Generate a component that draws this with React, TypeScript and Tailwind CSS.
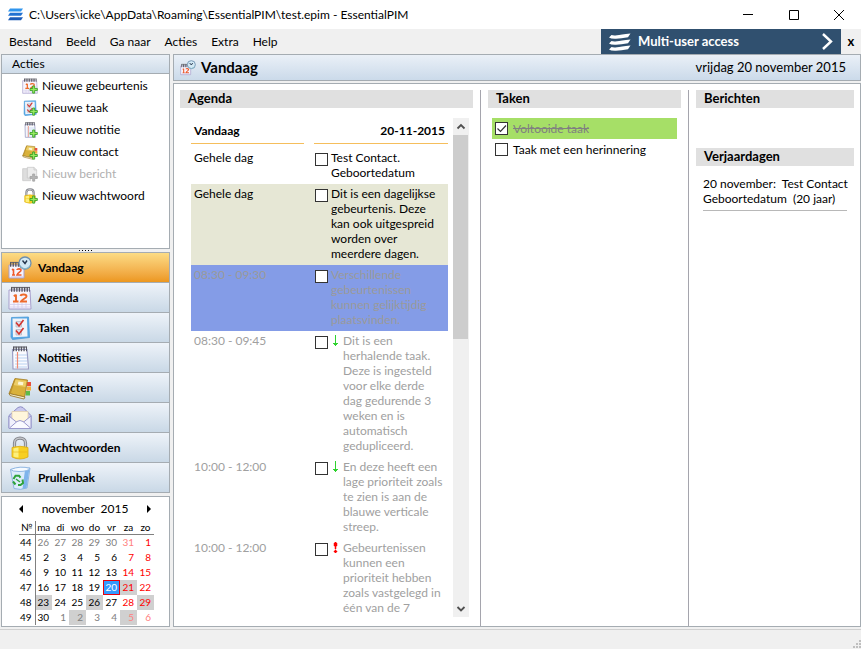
import { useState } from "react";
import type { ReactNode } from "react";

type IconProps = { className?: string };

const Spiral = ({ from, to, y }: { from: number; to: number; y: number }) => (
  <>
    <path d={`M${from} ${y - 2}H${to}`} stroke="#6e6e78" strokeWidth="1.2" fill="none" />
    <path d={`M${from} ${y}H${to}`} stroke="#55555e" strokeWidth="4.5" strokeDasharray="1.3 1.3" fill="none" />
  </>
);

const CalendarArt = () => (
  <>
    <path d="M1 4h21l1 19H1z" fill="#f6f4fd" stroke="#a79fcc" />
    <path d="M2 18.500h20M2 21h20M6 17v6M10 17v6M14 17v6M18 17v6" stroke="#cfc9ea" strokeWidth=".7" />
    <Spiral from={3} to={22} y={3.5} />
    <path d="M8 8.500v7M5.800 10.200l2-1.500M5 15.500h5.500" stroke="#ee6a2c" strokeWidth="1.900" fill="none" />
    <path d="M12.500 10c.5-2 6-2 6 .4 0 1.800-4.500 2.800-5.500 5.100h6" stroke="#ee6a2c" strokeWidth="1.900" fill="none" />
  </>
);

const TodayArt = () => (
  <>
    <path d="M1 9h15v13H1z" fill="#f6f4fd" stroke="#a79fcc" />
    <Spiral from={2} to={11} y={8.5} />
    <path d="M5.500 13v6M4 14l1.500-1M4 19h3" stroke="#ee5a2c" strokeWidth="1.600" fill="none" />
    <path d="M9 14c0-1.500 4-1.500 4 .3 0 1.500-3 2.200-4 4.700h4.500" stroke="#ee5a2c" strokeWidth="1.600" fill="none" />
    <path d="M3 21h12" stroke="#c9c2e6" />
    <circle cx="17" cy="7" r="6" fill="#d3e9f5" stroke="#6d8fae" strokeWidth="1.300" />
    <path d="M12 9.500a5.500 5.500 0 0 0 10 0" fill="none" stroke="#89bccb" strokeWidth="1" />
    <path d="M14.500 4.500L17 7.500l2-3" stroke="#26374d" strokeWidth="1.400" fill="none" />
  </>
);

const TaskArt = () => (
  <>
    <path d="M3.500 1.500L20.500 1l1 20.500-17 2L3 21z" fill="#58a8e6" stroke="#4a9ad8" strokeWidth=".8" />
    <path d="M4.500 2.500H19l.5 18-14.500.7z" fill="#f0f3f9" />
    <path d="M8 5.500h5.500V11H8zM8 13.500h5.500V19H8z" fill="#dfe1ea" stroke="#b4b9c8" strokeWidth=".8" />
    <path d="M8 6.500l3 3.500 4.500-6M8 14.500l3 3.500 4.500-6" stroke="#d2342f" strokeWidth="1.600" fill="none" />
  </>
);

const NoteArt = () => (
  <>
    <path d="M4.500 3.500H19L20.500 23H5z" fill="#fbfbff" stroke="#9b9ec4" strokeWidth="1.200" />
    <path d="M7 9h12M7 12h12M7 15h12M7 18h12M7 21h12" stroke="#b9d3f1" />
    <path d="M9.500 6v16.500" stroke="#f08a72" strokeWidth="1.200" />
    <Spiral from={5} to={19} y={3} />
  </>
);

const ContactArt = () => (
  <>
    <path d="M18.500 6H23v4h-4z" fill="#e8503c" />
    <path d="M18.500 10.500H23v4h-4.500z" fill="#f3b13c" />
    <path d="M17.500 15H22v4.500h-4.500z" fill="#5dbb4a" />
    <path d="M7 2.500L19.500 4 16.500 21 1 17.500z" fill="#d9b13b" stroke="#a37d24" strokeWidth=".8" />
    <path d="M7.500 3.500l11 1.500-1.200 6-12-2z" fill="#f0d573" opacity=".8" />
    <path d="M1 17.500l1 2L16 23l1-2z" fill="#f7f0d0" stroke="#94701c" strokeWidth=".8" />
    <path d="M10.500 5.500l5 .8-.7 3-5-.9z" fill="#fdf6d6" />
    <path d="M7 3L2 17.500" stroke="#b98f2c" strokeWidth="1.200" />
  </>
);

const MailArt = () => (
  <>
    <path d="M1 9.500L10 1.500q2.500-1.500 5 0l8 8V22H1z" fill="#c9c8ee" stroke="#8d8cc4" />
    <path d="M4 5.500h16v10H4z" fill="#fff6dc" stroke="#e3cfa6" strokeWidth=".7" />
    <path d="M1 10l8 6.500h6l8-6.500V22.500H1z" fill="#f1f1fc" stroke="#9a99cd" />
    <path d="M1.500 22L9 15.500q3-2 6 0l7.500 6.500" fill="#fafaff" stroke="#9a99cd" />
  </>
);

const LockArt = () => (
  <>
    <path d="M6.500 12V7c0-6.500 11-6.500 11 0v5" fill="none" stroke="#84868c" strokeWidth="3.200" />
    <path d="M6.500 12V7c0-6.500 11-6.500 11 0v5" fill="none" stroke="#c6c8cd" strokeWidth="1.300" />
    <path d="M4 11.500q8-2.500 16 0v9.500q-8 4-16 0z" fill="#f7cf22" stroke="#d9ab14" strokeWidth=".8" />
    <path d="M5.500 12.500q3-1 5-1v10q-3 0-5-1z" fill="#fdf07c" />
    <path d="M5 16h14" stroke="#e8ae12" strokeWidth=".6" />
  </>
);

const TrashArt = () => (
  <>
    <path d="M2.500 3.500L22 2l-3 20q-7 2.500-13 .5z" fill="#dcecfb" stroke="#8fb6e2" />
    <path d="M17 4l4.500-1.500-3 19.500-4 1z" fill="#7fb4ec" />
    <path d="M2.500 3.500Q12-.500 22 2.300 20 5.500 11 5.500 4 5.500 2.500 3.500z" fill="#f5faff" stroke="#8fb6e2" />
    <path d="M5.500 13l2-3.300h3.500l1.500 2M14.500 13.500l.5 3.500-2.500 2H10M7.500 18.500L5 15.500" fill="none" stroke="#2ea33b" strokeWidth="2" />
    <path d="M8 13l4 3" stroke="#2ea33b" strokeWidth="1.400" />
  </>
);

const MessageArt = () => (
  <>
    <path d="M1 4h12v18H1z" fill="#dedede" stroke="#c4c4c4" />
    <path d="M8 2h10l4 4v12H8z" fill="#ececec" stroke="#c2c2c2" />
    <path d="M18 2v4h4" fill="none" stroke="#c2c2c2" />
  </>
);

const Plus = ({ muted }: { muted?: boolean }) => (
  <path
    d="M16 12h3v3.700h4v3h-4v4h-3v-4h-4v-3h4z"
    fill={muted ? "#b5b5b5" : "#9aec62"}
    stroke={muted ? "#a2a2a2" : "#2f9a1f"}
    strokeWidth="1.200"
  />
);

function Icon({ className = "size-6", children }: IconProps & { children: ReactNode }) {
  return (
    <svg viewBox="0 0 24 24" className={`shrink-0 ${className}`} aria-hidden="true">
      {children}
    </svg>
  );
}

const menu = ["Bestand", "Beeld", "Ga naar", "Acties", "Extra", "Help"];

const actions = [
  { label: "Nieuwe gebeurtenis", art: <CalendarArt /> },
  { label: "Nieuwe taak", art: <TaskArt /> },
  { label: "Nieuwe notitie", art: <NoteArt /> },
  { label: "Nieuw contact", art: <ContactArt /> },
  { label: "Nieuw bericht", art: <MessageArt />, disabled: true },
  { label: "Nieuw wachtwoord", art: <LockArt /> },
];

const modules = [
  { label: "Vandaag", art: <TodayArt /> },
  { label: "Agenda", art: <CalendarArt /> },
  { label: "Taken", art: <TaskArt /> },
  { label: "Notities", art: <NoteArt /> },
  { label: "Contacten", art: <ContactArt /> },
  { label: "E-mail", art: <MailArt /> },
  { label: "Wachtwoorden", art: <LockArt /> },
  { label: "Prullenbak", art: <TrashArt /> },
];

const events = [
  { time: "Gehele dag", text: "Test Contact.\nGeboortedatum", style: "text-black" },
  {
    time: "Gehele dag",
    text: "Dit is een dagelijkse\ngebeurtenis. Deze\nkan ook uitgespreid\nworden over\nmeerdere dagen.",
    style: "bg-[#e6e7d5] text-black",
  },
  {
    time: "08:30 - 09:30",
    text: "Verschillende\ngebeurtenissen\nkunnen gelijktijdig\nplaatsvinden.",
    style: "bg-[#849ce7] text-[#9a9a9a]",
  },
  {
    time: "08:30 - 09:45",
    text: "Dit is een\nherhalende taak.\nDeze is ingesteld\nvoor elke derde\ndag gedurende 3\nweken en is\nautomatisch\ngedupliceerd.",
    priority: "low",
    style: "text-[#a0a0a0]",
  },
  {
    time: "10:00 - 12:00",
    text: "En deze heeft een\nlage prioriteit zoals\nte zien is aan de\nblauwe verticale\nstreep.",
    priority: "low",
    style: "text-[#a0a0a0]",
  },
  {
    time: "10:00 - 12:00",
    text: "Gebeurtenissen\nkunnen een\nprioriteit hebben\nzoals vastgelegd in\néén van de 7",
    priority: "high",
    style: "text-[#a0a0a0]",
  },
];

const weekdays = ["ma", "di", "wo", "do", "vr", "za", "zo"];

const weeks = [
  { nr: 44, days: [26, 27, 28, 29, 30, 31, 1] },
  { nr: 45, days: [2, 3, 4, 5, 6, 7, 8] },
  { nr: 46, days: [9, 10, 11, 12, 13, 14, 15] },
  { nr: 47, days: [16, 17, 18, 19, 20, 21, 22] },
  { nr: 48, days: [23, 24, 25, 26, 27, 28, 29] },
  { nr: 49, days: [30, 1, 2, 3, 4, 5, 6] },
];

// days with something planned, as "week-day"
const marked = ["47-21", "48-23", "48-26", "48-29", "49-2", "49-5"];

function dayStyle(nr: number, day: number, col: number) {
  if (nr === 47 && day === 20) return "bg-[#3399ff] text-white outline outline-1 -outline-offset-1 outline-red-600";
  const outside = (nr === 44 && day > 7) || (nr === 49 && day < 7);
  const color =
    col > 4 ? (outside ? "text-[#ff8080]" : "text-[#ff0000]") : outside ? "text-[#808080]" : "text-black";
  return marked.includes(`${nr}-${day}`) ? `${color} bg-[#d0d0d0]` : color;
}

function Checkbox({ defaultChecked = false }: { defaultChecked?: boolean }) {
  const [checked, setChecked] = useState(defaultChecked);
  return (
    <span className="relative flex size-[13px] shrink-0">
      <input
        type="checkbox"
        checked={checked}
        onChange={() => setChecked(!checked)}
        className="size-[13px] appearance-none border border-[#333] bg-white"
      />
      {checked && (
        <svg viewBox="0 0 13 13" className="pointer-events-none absolute inset-0" aria-hidden="true">
          <path d="M2.500 6.500l3 3L11 3.500" fill="none" stroke="#333" strokeWidth="1.200" />
        </svg>
      )}
    </span>
  );
}

function Priority({ level }: { level: string }) {
  return (
    <svg viewBox="0 0 5 11" className="mt-[2px] h-[11px] w-[5px] shrink-0" aria-hidden="true">
      {level === "low" ? (
        <path d="M2 0h1v8h2v1H4v1H3v1H2v-1H1V9H0V8h2z" fill="#2fd22f" />
      ) : (
        <path d="M2 0h1v1h1v3H3v3H2V4H1V1h1zM2 8h1v1h1v1H3v1H2v-1H1V9h1z" fill="#f00" stroke="#f00" strokeWidth=".5" />
      )}
    </svg>
  );
}

function SectionTitle({ children }: { children: ReactNode }) {
  return <h2 className="h-[18px] bg-[#e0e0e0] pl-2 text-[13px] leading-[17px] font-bold">{children}</h2>;
}

function TitleBar() {
  return (
    <header className="flex h-[29px] shrink-0 items-center bg-white pl-2">
      <svg viewBox="0 0 15 13" className="mr-[6px] h-[13px] w-[15px]" aria-hidden="true">
        <path d="M2 .500h13L13 3.500H0z" fill="#2f95ee" />
        <path d="M2 4.800h13l-2 3H0z" fill="#2272d2" />
        <path d="M2 9.200h13l-2 3H0z" fill="#1c5cb8" />
      </svg>
      <h1 className="flex-1 text-[12px]">C:\Users\icke\AppData\Roaming\EssentialPIM\test.epim - EssentialPIM</h1>
      <button aria-label="Minimaliseren" className="flex h-full w-[46px] items-center justify-center">
        <svg viewBox="0 0 10 10" className="size-[10px]"><path d="M0 4.500h10" stroke="#000" /></svg>
      </button>
      <button aria-label="Maximaliseren" className="flex h-full w-[46px] items-center justify-center">
        <svg viewBox="0 0 10 10" className="size-[10px]"><path d="M.5.500h9v9h-9z" fill="none" stroke="#000" /></svg>
      </button>
      <button aria-label="Sluiten" className="flex h-full w-[44px] items-center justify-center">
        <svg viewBox="0 0 10 10" className="size-[10px]"><path d="M0 0l10 10M10 0L0 10" stroke="#000" /></svg>
      </button>
    </header>
  );
}

function MenuBar() {
  return (
    <div className="flex h-[25px] shrink-0 items-stretch">
      <nav className="flex flex-1 items-center pl-px">
        {menu.map((item) => (
          <button key={item} className="px-[7px] text-[12px] first:pl-2">
            {item}
          </button>
        ))}
      </nav>
      <a href="#multi-user" className="flex w-[240px] items-center bg-[#30506f] px-2 text-white">
        <svg viewBox="0 0 22 18" className="mr-[7px] h-[18px] w-[22px]" aria-hidden="true">
          <path d="M2.500 2q2 .700 5.500.2t13.500-1.700L19 4.200Q12 5.500 7 5.700T0 4.500z" fill="#fff" />
          <path d="M2.500 8q2 .700 5.500.2t13.500-1.700L19 10.200q-7 1.300-12 1.500T0 10.500z" fill="#fff" />
          <path d="M2.500 14q2 .700 5.500.2t13.500-1.700L19 16.200q-7 1.300-12 1.500T0 16.500z" fill="#fff" />
        </svg>
        <span className="flex-1 text-[13px] font-bold">Multi-user access</span>
        <svg viewBox="0 0 11 17" className="h-[17px] w-[11px]" aria-hidden="true">
          <path d="M1 1l8 7.500L1 16" fill="none" stroke="#fff" strokeWidth="2.400" />
        </svg>
      </a>
      <button aria-label="Banner sluiten" className="w-5 text-center text-[13px] font-bold">
        x
      </button>
    </div>
  );
}

function MiniCalendar() {
  return (
    <section className="mt-[3px] flex-1 border border-[#a5acb2] bg-white pl-[17px]">
      <div className="flex h-[24px] w-[132px] items-center justify-between">
        <button aria-label="Vorige maand">
          <svg viewBox="0 0 4 8" className="h-2 w-1"><path d="M4 0v8L0 4z" /></svg>
        </button>
        <span className="text-[12px]">november&nbsp; 2015</span>
        <button aria-label="Volgende maand">
          <svg viewBox="0 0 4 8" className="h-2 w-1"><path d="M0 0v8l4-4z" /></svg>
        </button>
      </div>
      <table className="w-[135px] table-fixed border-collapse text-right text-[10px]">
        <thead>
          <tr className="h-[13px] border-b border-[#808080] leading-3">
            <th className="w-[16px] border-r border-[#808080] p-0 text-center font-normal">№</th>
            {weekdays.map((day) => (
              <th key={day} className="w-[17px] p-0 text-center font-normal">
                {day}
              </th>
            ))}
          </tr>
        </thead>
        <tbody>
          {weeks.map((week) => (
            <tr key={week.nr} className="h-[15px] leading-[15px]">
              <th className="border-r border-[#808080] p-0 pr-[3px] font-normal">{week.nr}</th>
              {week.days.map((day, col) => (
                <td key={col} className={`p-0 pr-[3px] ${dayStyle(week.nr, day, col)}`}>
                  {day}
                </td>
              ))}
            </tr>
          ))}
        </tbody>
      </table>
    </section>
  );
}

function Sidebar() {
  const [active, setActive] = useState("Vandaag");
  return (
    <aside className="flex w-[169px] shrink-0 flex-col">
      <section className="flex h-[195px] flex-col border border-[#a5acb2] bg-white">
        <h2 className="h-[19px] border-b border-[#a5acb2] bg-gradient-to-b from-[#eaf0f7] to-[#cfdce9] pl-[10px] text-[12px] leading-[17px]">
          Acties
        </h2>
        <ul className="pt-px pl-5">
          {actions.map((action) => (
            <li key={action.label}>
              <button
                disabled={action.disabled}
                className="flex h-[22px] items-center gap-1 text-[12px] disabled:text-[#b0b0b0]"
              >
                <Icon className="size-4">
                  {action.art}
                  <Plus muted={action.disabled} />
                </Icon>
                {action.label}
              </button>
            </li>
          ))}
        </ul>
      </section>
      <div className="flex h-[3px] items-center justify-center gap-[2px]">
        {[0, 1, 2, 3, 4].map((i) => (
          <span key={i} className="size-px bg-black" />
        ))}
      </div>
      <nav className="border-x border-t border-[#a5acb2]">
        {modules.map((item) => (
          <button
            key={item.label}
            onClick={() => setActive(item.label)}
            className={`flex h-[30px] w-full items-center gap-[6px] border-b border-[#a5acb2] bg-gradient-to-b pl-[6px] text-[12px] font-bold ${
              active === item.label ? "from-[#fcdc84] to-[#ec971d]" : "from-[#eef3f9] to-[#c9d8e6]"
            }`}
          >
            <Icon>{item.art}</Icon>
            {item.label}
          </button>
        ))}
      </nav>
      <MiniCalendar />
    </aside>
  );
}

function Agenda() {
  return (
    <section className="flex min-h-0 flex-col pt-[6px] pr-[7px] pb-[9px] pl-[6px]">
      <SectionTitle>Agenda</SectionTitle>
      <div className="mt-[10px] flex min-h-0 flex-1 pr-1 pl-[11px]">
        <div className="mr-[5px] flex-1 overflow-hidden text-[12px] leading-[15px]">
          <div className="mb-1 grid h-[26px] grid-cols-[minmax(0,113fr)_minmax(0,134fr)] gap-[10px] font-bold leading-[25px]">
            <span className="border-b border-[#f5be5c] pl-[3px]">Vandaag</span>
            <span className="border-b border-[#f5be5c] pr-[3px] text-right">20-11-2015</span>
          </div>
          {events.map((event, i) => (
            <label
              key={i}
              className={`grid grid-cols-[minmax(0,113fr)_minmax(0,134fr)] gap-[10px] pt-[2px] pb-1 ${event.style}`}
            >
              <span className="pl-[3px]">{event.time}</span>
              <span className="flex gap-[3px] pl-px">
                <span className="pt-[3px]">
                  <Checkbox />
                </span>
                {event.priority && (
                  <span className="w-[9px] pl-[2px]">
                    <Priority level={event.priority} />
                  </span>
                )}
                <span className="whitespace-pre">{event.text}</span>
              </span>
            </label>
          ))}
        </div>
        <div className="flex w-4 flex-col bg-[#f0f0f0]" aria-hidden="true">
          <svg viewBox="0 0 16 17" className="h-[17px] w-4">
            <path d="M4.500 10.500L8 7l3.500 3.500" fill="none" stroke="#505050" strokeWidth="1.800" />
          </svg>
          <div className="h-[204px] w-[15px] bg-[#cdcdcd]" />
          <svg viewBox="0 0 16 17" className="mt-auto h-[17px] w-4">
            <path d="M4.500 7L8 10.500 11.500 7" fill="none" stroke="#505050" strokeWidth="1.800" />
          </svg>
        </div>
      </div>
    </section>
  );
}

function Tasks() {
  return (
    <section className="mt-[6px] border-l border-[#a5a5ad] px-[7px]">
      <SectionTitle>Taken</SectionTitle>
      <div className="mx-1 mt-[10px] text-[12px]">
        <label className="flex h-[21px] items-center gap-[5px] bg-[#a6df67] pl-[3px] text-[#808080] line-through">
          <Checkbox defaultChecked />
          Voltooide taak
        </label>
        <label className="flex h-[21px] items-center gap-[5px] pl-[3px]">
          <Checkbox />
          Taak met een herinnering
        </label>
      </div>
    </section>
  );
}

function Messages() {
  return (
    <section className="mt-[6px] border-l border-[#a5a5ad] pr-[6px] pl-[7px]">
      <SectionTitle>Berichten</SectionTitle>
      <div className="h-10" />
      <SectionTitle>Verjaardagen</SectionTitle>
      <p className="mx-[7px] mt-[10px] border-b border-[#b8b8b8] pb-1 text-[12px] leading-[15px] whitespace-pre">
        {"20 november:  Test Contact\nGeboortedatum  (20 jaar)"}
      </p>
    </section>
  );
}

function StatusBar() {
  return (
    <footer className="flex h-5 shrink-0 items-end justify-end border-t border-[#d0d0d0] pb-px">
      <svg viewBox="0 0 8 8" className="size-2" aria-hidden="true">
        <path d="M6 0h2v2H6zM3 3h2v2H3zM6 3h2v2H6zM0 6h2v2H0zM3 6h2v2H3zM6 6h2v2H6z" fill="#bfbfbf" />
      </svg>
    </footer>
  );
}

export default function App() {
  return (
    <div className="flex h-screen min-h-[640px] flex-col bg-[#f0f0f0] font-['Lato','Open_Sans',sans-serif] text-black">
      <TitleBar />
      <MenuBar />
      <div className="flex min-h-0 flex-1 gap-[3px] pb-[2px] pl-px">
        <Sidebar />
        <main className="flex min-w-0 flex-1 flex-col gap-[2px]">
          <div className="flex h-[27px] items-center border border-[#a5acb2] bg-gradient-to-b from-[#eaf0f7] to-[#cbdaea] pr-[14px] pl-[6px]">
            <Icon className="mr-[5px] size-4">
              <TodayArt />
            </Icon>
            <h2 className="flex-1 text-[15px] font-bold">Vandaag</h2>
            <span className="text-[13px]">vrijdag 20 november 2015</span>
          </div>
          <div className="grid min-h-0 flex-1 grid-cols-[minmax(0,306fr)_minmax(0,208fr)_minmax(0,172fr)] border border-[#a5acb2] bg-white">
            <Agenda />
            <Tasks />
            <Messages />
          </div>
        </main>
      </div>
      <StatusBar />
    </div>
  );
}
